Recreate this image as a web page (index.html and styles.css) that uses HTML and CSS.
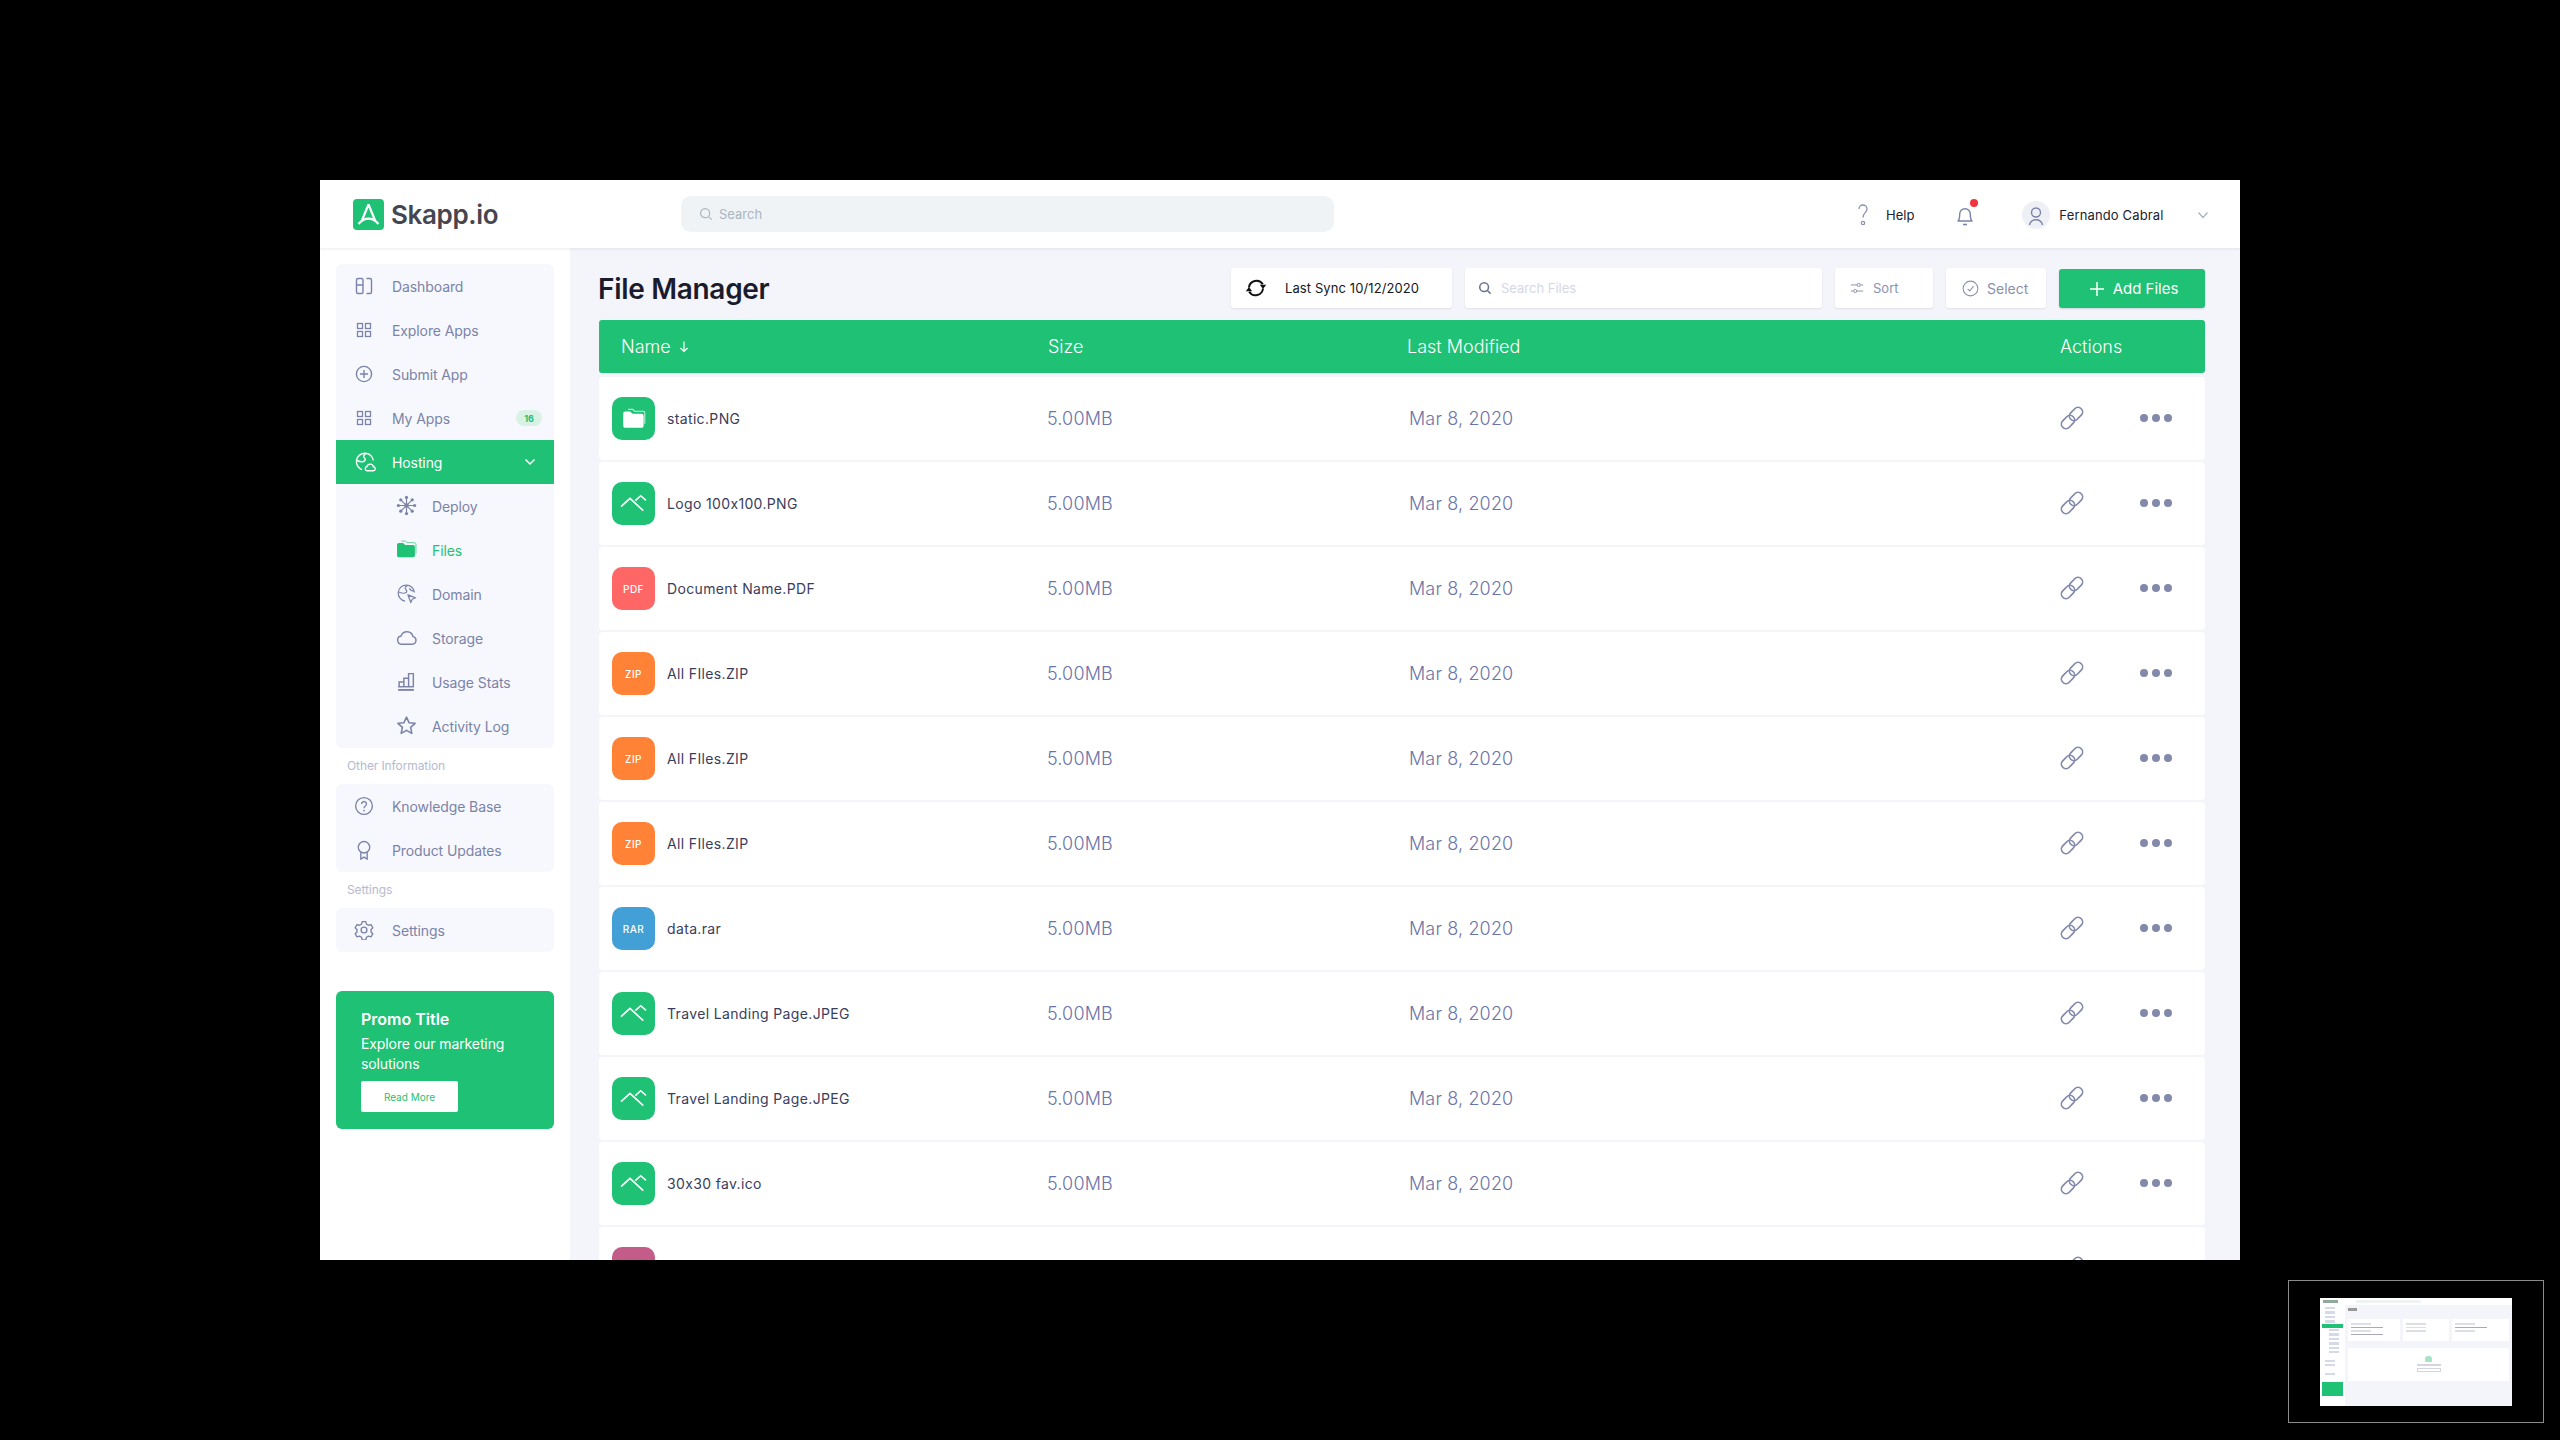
FILE: index.html
```html
<!DOCTYPE html>
<html>
<head>
  <meta charset="UTF-8">
  <title>Skapp.io File Manager</title>
  <link rel="stylesheet" href="styles.css">
</head>
<body>
  <svg class="defs" width="0" height="0">
    <symbol id="i-folder" viewBox="0 0 20 18">
      <path d="M1 4.500c0-1 .7-1.700 1.700-1.700h4.100l1.900 1.900h7.600c1 0 1.700.7 1.700 1.700v8.200c0 1-.7 1.700-1.700 1.700H2.700c-1 0-1.700-.7-1.700-1.700z" fill="currentColor"/>
      <path d="M5 1h4l1.500 1.500h7c.8 0 1.500.7 1.500 1.500v9" fill="none" stroke="currentColor" stroke-width=".9" opacity=".75"/>
    </symbol>
    <symbol id="i-peaks" viewBox="0 0 43 43">
      <path d="M9 24.700 18 16.300 31.300 28.700M23.300 18.700 28.700 13.700 34 18.300" fill="none" stroke="#fff" stroke-width="1.600"/>
    </symbol>
    <symbol id="i-link" viewBox="1.500 1.500 21 21">
      <g fill="none" stroke="currentColor" stroke-width="1.500">
        <rect x="9" y="4.500" width="13" height="8" rx="4" transform="rotate(-45 15.500 8.500)"/>
        <rect x="2" y="11.500" width="13" height="8" rx="4" transform="rotate(-45 8.500 15.500)"/>
      </g>
    </symbol>
    <symbol id="i-dots" viewBox="0 0 32 8">
      <circle cx="4" cy="4" r="4" fill="currentColor"/><circle cx="16" cy="4" r="4" fill="currentColor"/><circle cx="28" cy="4" r="4" fill="currentColor"/>
    </symbol>
    <symbol id="i-grid" viewBox="0 0 16 16">
      <g fill="none" stroke="currentColor" stroke-width="1.300"><rect x="1.500" y="1.500" width="5" height="5"/><rect x="9.500" y="1.500" width="5" height="5"/><rect x="1.500" y="9.500" width="5" height="5"/><rect x="9.500" y="9.500" width="5" height="5"/></g>
    </symbol>
  </svg>

  <div class="app">
    <header class="topbar">
      <div class="brand">
        <svg class="brand-mark" viewBox="0 0 31 31">
          <rect width="31" height="31" rx="4" fill="#1fc175"/>
          <path d="M15.500 5.500 8.500 22.500M15.500 5.500l7 17M5.500 25c3-3.600 6.200-5.400 10-5.400s7 1.800 10 5.400" fill="none" stroke="#fff" stroke-width="2.200"/>
        </svg>
        <span class="brand-name">Skapp.io</span>
      </div>
      <div class="global-search">
        <svg class="ico-14" viewBox="0 0 16 16"><circle cx="7" cy="7" r="5.200" fill="none" stroke="currentColor" stroke-width="1.400"/><path d="M11 11l3.500 3.500" stroke="currentColor" stroke-width="1.400"/></svg>
        <span>Search</span>
      </div>
      <div class="top-right">
        <svg class="q-mark" viewBox="0 0 12 24"><path d="M2 6a4 4 0 0 1 8 0c0 3.500-4 4-4 8.500" fill="none" stroke="#8a91ad" stroke-width="1.300"/><circle cx="6" cy="20" r="1.700" fill="none" stroke="#8a91ad" stroke-width="1.200"/></svg>
        <span class="help">Help</span>
        <span class="bell">
          <svg viewBox="0 0 20 24" width="20" height="24"><path d="M3 18c1.500-1.500 1.700-3 1.700-7a5.300 5.300 0 0 1 10.600 0c0 4 .2 5.500 1.700 7z" fill="none" stroke="#7b83a8" stroke-width="1.400" stroke-linejoin="round"/><path d="M8 21.500h4" stroke="#7b83a8" stroke-width="1.600"/></svg>
          <i class="bell-dot"></i>
        </span>
        <span class="avatar">
          <svg viewBox="0 0 28 28" width="28" height="28"><circle cx="14" cy="11.500" r="4.500" fill="none" stroke="#7b83a8" stroke-width="1.400"/><path d="M7.500 24c.8-3.500 3.200-5.200 6.500-5.200s5.700 1.700 6.500 5.200" fill="none" stroke="#7b83a8" stroke-width="1.400"/></svg>
        </span>
        <span class="user-name">Fernando Cabral</span>
        <svg class="user-caret" viewBox="0 0 12 8"><path d="M1.500 1.500 6 6.500l4.500-5" fill="none" stroke="#a9b0c4" stroke-width="1.200"/></svg>
      </div>
    </header>

    <div class="layout">
      <aside class="sidebar">
        <nav class="nav-group">
          <a class="nav-item">
            <svg class="nav-ico" viewBox="0 0 20 20"><g fill="none" stroke="currentColor" stroke-width="1.400"><rect x="2.500" y="2.500" width="6.500" height="15" rx="1.500"/><path d="M2.500 9h6.500M12.500 2.500h3.500c.8 0 1.500.7 1.500 1.500v12c0 .8-.7 1.500-1.500 1.500h-3.500"/></g></svg>
            Dashboard
          </a>
          <a class="nav-item"><svg class="nav-ico nav-ico-sm"><use href="#i-grid"/></svg>Explore Apps</a>
          <a class="nav-item">
            <svg class="nav-ico" viewBox="0 0 20 20"><g fill="none" stroke="currentColor" stroke-width="1.400"><circle cx="10" cy="10" r="7.600"/><path d="M10 6v8M6 10h8"/></g></svg>
            Submit App
          </a>
          <a class="nav-item"><svg class="nav-ico nav-ico-sm"><use href="#i-grid"/></svg>My Apps<span class="badge">16</span></a>
          <a class="nav-item active">
            <svg class="nav-ico" viewBox="0 0 22 22"><g fill="none" stroke="currentColor" stroke-width="1.400"><path d="M19.300 9.500A8.500 8.500 0 1 0 8 18.700"/><path d="M12 2.500c-2.500 1.500-3 3.200-1.500 4.500 1.300 1.200 1 2.800-1 3.500-2.400.8-4 0-6.500-1"/><path d="M13 19.800h6a2 2 0 0 0 .4-4 3.300 3.300 0 0 0-6.400-.3 2.200 2.200 0 0 0 0 4.300z"/></g></svg>
            Hosting
            <svg class="nav-caret" viewBox="0 0 12 8"><path d="M1.500 1.500 6 6l4.500-4.500" fill="none" stroke="#fff" stroke-width="1.500"/></svg>
          </a>
          <a class="nav-item sub">
            <svg class="nav-ico" viewBox="0 0 22 22"><g stroke="currentColor" stroke-width="1.200"><path d="M11 3v16M3 11h16M5.300 5.300l11.400 11.400M16.700 5.300 5.300 16.700"/></g><g fill="currentColor"><circle cx="11" cy="11" r="2.300"/><circle cx="11" cy="2.500" r="1.700"/><circle cx="11" cy="19.500" r="1.700"/><circle cx="2.500" cy="11" r="1.700"/><circle cx="19.500" cy="11" r="1.700"/><circle cx="5" cy="5" r="1.700"/><circle cx="17" cy="5" r="1.700"/><circle cx="5" cy="17" r="1.700"/><circle cx="17" cy="17" r="1.700"/></g></svg>
            Deploy
          </a>
          <a class="nav-item sub current"><svg class="nav-ico"><use href="#i-folder"/></svg>Files</a>
          <a class="nav-item sub">
            <svg class="nav-ico" viewBox="0 0 22 22"><g fill="none" stroke="currentColor" stroke-width="1.300"><path d="M19.300 10A8.500 8.500 0 1 0 9.500 19"/><path d="M12 2.500c-2.500 1.500-3 3.200-1.500 4.500 1.300 1.200 1 2.800-1 3.500-2.400.8-4 0-6.500-1M14 5.500c1 2 3 3 5 3"/><path d="M12.500 12.500l8 3-3.500 1.500-1.500 3.500z" stroke-linejoin="round"/></g></svg>
            Domain
          </a>
          <a class="nav-item sub">
            <svg class="nav-ico" viewBox="0 0 22 16"><path d="M5.500 15H17a4 4 0 0 0 .8-7.900A6.500 6.500 0 0 0 5.300 6.500 4.300 4.300 0 0 0 5.500 15z" fill="none" stroke="currentColor" stroke-width="1.500"/></svg>
            Storage
          </a>
          <a class="nav-item sub">
            <svg class="nav-ico" viewBox="0 0 20 20"><g fill="none" stroke="currentColor" stroke-width="1.400"><path d="M3 15v-4.500h4.500V15M7.500 15V7h4.500v8M12 15V2.500h4.500V15"/><path d="M2 15h15" /><path d="M2 18h15" stroke-width="1.800"/></g></svg>
            Usage Stats
          </a>
          <a class="nav-item sub">
            <svg class="nav-ico" viewBox="0 0 20 20"><path d="M10 2l2.400 5.300 5.800.6-4.300 3.900 1.200 5.700L10 14.600l-5.100 2.900 1.200-5.700-4.300-3.900 5.800-.6z" fill="none" stroke="currentColor" stroke-width="1.500" stroke-linejoin="round"/></svg>
            Activity Log
          </a>
        </nav>
        <div class="nav-label">Other Information</div>
        <nav class="nav-group">
          <a class="nav-item">
            <svg class="nav-ico" viewBox="0 0 22 22"><circle cx="11" cy="11" r="9.200" fill="none" stroke="currentColor" stroke-width="1.500"/><path d="M8.300 8.700a2.700 2.700 0 1 1 4.200 2.300c-1 .7-1.500 1.200-1.500 2.500" fill="none" stroke="currentColor" stroke-width="1.500"/><circle cx="11" cy="16" r="1" fill="currentColor"/></svg>
            Knowledge Base
          </a>
          <a class="nav-item">
            <svg class="nav-ico" viewBox="0 0 22 22"><g fill="none" stroke="currentColor" stroke-width="1.500"><circle cx="11" cy="8" r="6.300"/><path d="M7.500 13.500V21l3.500-2.200 3.500 2.200v-7.500"/></g></svg>
            Product Updates
          </a>
        </nav>
        <div class="nav-label">Settings</div>
        <nav class="nav-group">
          <a class="nav-item">
            <svg class="nav-ico" viewBox="0 0 22 22"><g fill="none" stroke="currentColor" stroke-width="1.500" stroke-linejoin="round"><path d="M9 1.800h4l.7 2.800 2.200 1.200 2.800-.8 2 3.500-2 2 .1 1.300-.1 1.300 2 2-2 3.500-2.800-.8-2.200 1.200-.7 2.800H9l-.7-2.800-2.200-1.200-2.800.8-2-3.500 2-2-.1-1.300.1-1.300-2-2 2-3.500 2.800.8 2.200-1.200z"/><circle cx="11" cy="11" r="3.200"/></g></svg>
            Settings
          </a>
        </nav>
        <div class="promo">
          <div class="promo-title">Promo Title</div>
          <div class="promo-text">Explore our marketing solutions</div>
          <a class="promo-btn">Read More</a>
        </div>
      </aside>

      <main class="main">
        <div class="toolbar">
          <h1>File Manager</h1>
          <div class="tool sync">
            <svg viewBox="0 0 24 24" width="24" height="24"><g fill="none" stroke="#111" stroke-width="2"><path d="M5 11.500a7.500 7.500 0 0 1 13.800-3.200M19 12.500a7.500 7.500 0 0 1-13.800 3.200"/></g><path d="M15.800 8.800h6.400L19 13zM1.800 15.200h6.400L5 11z" fill="#111"/></svg>
            <span>Last Sync 10/12/2020</span>
          </div>
          <div class="tool file-search">
            <svg class="ico-14" viewBox="0 0 16 16"><circle cx="7" cy="7" r="5" fill="none" stroke="currentColor" stroke-width="1.800"/><path d="M10.500 10.500l4 4" stroke="currentColor" stroke-width="1.800"/></svg>
            <span>Search Files</span>
          </div>
          <div class="tool sort">
            <svg class="ico-14" viewBox="0 0 16 16"><g fill="none" stroke="currentColor" stroke-width="1.100"><path d="M1 4.500h7M12 4.500h3M1 11.500h3M8 11.500h7"/><circle cx="10" cy="4.500" r="1.800"/><circle cx="6" cy="11.500" r="1.800"/></g></svg>
            <span>Sort</span>
          </div>
          <div class="tool select">
            <svg class="ico-17" viewBox="0 0 18 18"><circle cx="9" cy="9" r="7.800" fill="none" stroke="currentColor" stroke-width="1.100"/><path d="M6 9.300l2.200 2.200L12.300 6.500" fill="none" stroke="currentColor" stroke-width="1.100"/></svg>
            <span>Select</span>
          </div>
          <div class="add-files">
            <svg class="ico-14" viewBox="0 0 14 14"><path d="M7 0v14M0 7h14" stroke="#fff" stroke-width="1.500"/></svg>
            <span>Add Files</span>
          </div>
        </div>

        <div class="table-head">
          <span>Name <svg class="sort-arrow" viewBox="0 0 10 12"><path d="M5 .5v10M1.500 7 5 10.500 8.500 7" fill="none" stroke="#fff" stroke-width="1.200"/></svg></span>
          <span>Size</span>
          <span>Last Modified</span>
          <span>Actions</span>
        </div>

        <div class="file-row">
          <div class="file-name"><span class="file-ico green"><svg class="folder-ico"><use href="#i-folder"/></svg></span>static.PNG</div>
          <div class="file-meta">5.00MB</div><div class="file-meta">Mar 8, 2020</div>
          <div class="file-actions"><svg class="link-ico"><use href="#i-link"/></svg><svg class="dots-ico"><use href="#i-dots"/></svg></div>
        </div>
        <div class="file-row">
          <div class="file-name"><span class="file-ico green"><svg class="peaks-ico"><use href="#i-peaks"/></svg></span>Logo 100x100.PNG</div>
          <div class="file-meta">5.00MB</div><div class="file-meta">Mar 8, 2020</div>
          <div class="file-actions"><svg class="link-ico"><use href="#i-link"/></svg><svg class="dots-ico"><use href="#i-dots"/></svg></div>
        </div>
        <div class="file-row">
          <div class="file-name"><span class="file-ico red">PDF</span>Document Name.PDF</div>
          <div class="file-meta">5.00MB</div><div class="file-meta">Mar 8, 2020</div>
          <div class="file-actions"><svg class="link-ico"><use href="#i-link"/></svg><svg class="dots-ico"><use href="#i-dots"/></svg></div>
        </div>
        <div class="file-row">
          <div class="file-name"><span class="file-ico orange">ZIP</span>All FIles.ZIP</div>
          <div class="file-meta">5.00MB</div><div class="file-meta">Mar 8, 2020</div>
          <div class="file-actions"><svg class="link-ico"><use href="#i-link"/></svg><svg class="dots-ico"><use href="#i-dots"/></svg></div>
        </div>
        <div class="file-row">
          <div class="file-name"><span class="file-ico orange">ZIP</span>All FIles.ZIP</div>
          <div class="file-meta">5.00MB</div><div class="file-meta">Mar 8, 2020</div>
          <div class="file-actions"><svg class="link-ico"><use href="#i-link"/></svg><svg class="dots-ico"><use href="#i-dots"/></svg></div>
        </div>
        <div class="file-row">
          <div class="file-name"><span class="file-ico orange">ZIP</span>All FIles.ZIP</div>
          <div class="file-meta">5.00MB</div><div class="file-meta">Mar 8, 2020</div>
          <div class="file-actions"><svg class="link-ico"><use href="#i-link"/></svg><svg class="dots-ico"><use href="#i-dots"/></svg></div>
        </div>
        <div class="file-row">
          <div class="file-name"><span class="file-ico blue">RAR</span>data.rar</div>
          <div class="file-meta">5.00MB</div><div class="file-meta">Mar 8, 2020</div>
          <div class="file-actions"><svg class="link-ico"><use href="#i-link"/></svg><svg class="dots-ico"><use href="#i-dots"/></svg></div>
        </div>
        <div class="file-row">
          <div class="file-name"><span class="file-ico green"><svg class="peaks-ico"><use href="#i-peaks"/></svg></span>Travel Landing Page.JPEG</div>
          <div class="file-meta">5.00MB</div><div class="file-meta">Mar 8, 2020</div>
          <div class="file-actions"><svg class="link-ico"><use href="#i-link"/></svg><svg class="dots-ico"><use href="#i-dots"/></svg></div>
        </div>
        <div class="file-row">
          <div class="file-name"><span class="file-ico green"><svg class="peaks-ico"><use href="#i-peaks"/></svg></span>Travel Landing Page.JPEG</div>
          <div class="file-meta">5.00MB</div><div class="file-meta">Mar 8, 2020</div>
          <div class="file-actions"><svg class="link-ico"><use href="#i-link"/></svg><svg class="dots-ico"><use href="#i-dots"/></svg></div>
        </div>
        <div class="file-row">
          <div class="file-name"><span class="file-ico green"><svg class="peaks-ico"><use href="#i-peaks"/></svg></span>30x30 fav.ico</div>
          <div class="file-meta">5.00MB</div><div class="file-meta">Mar 8, 2020</div>
          <div class="file-actions"><svg class="link-ico"><use href="#i-link"/></svg><svg class="dots-ico"><use href="#i-dots"/></svg></div>
        </div>
        <div class="file-row">
          <div class="file-name"><span class="file-ico pink"></span></div>
          <div class="file-meta"></div><div class="file-meta"></div>
          <div class="file-actions"><svg class="link-ico"><use href="#i-link"/></svg><svg class="dots-ico"><use href="#i-dots"/></svg></div>
        </div>
      </main>
    </div>
  </div>

  <div class="minimap">
    <div class="mini-page">
      <div class="mini-top"><i class="mini-logo"></i><i class="mini-search"></i></div>
      <div class="mini-layout">
        <div class="mini-side">
          <i></i><i></i><i></i><i></i><i class="on"></i><i class="in"></i><i class="in"></i><i class="in"></i><i class="in"></i><i class="in"></i><i class="in"></i>
          <i class="gap"></i><i></i><i></i><i class="gap"></i><i></i>
          <b class="mini-promo"></b>
        </div>
        <div class="mini-main">
          <div class="mini-title"></div>
          <div class="mini-cards">
            <div class="mini-card"><i></i><i class="dark"></i><i></i><i class="dark"></i></div>
            <div class="mini-card"><i></i><i></i><i></i></div>
            <div class="mini-card"><i></i><i class="dark"></i><i></i></div>
          </div>
          <div class="mini-drop"><i class="mini-cloud"></i><i class="mini-line"></i><i class="mini-btn"></i></div>
        </div>
      </div>
    </div>
  </div>
</body>
</html>
```

FILE: styles.css
```css
* {
  box-sizing: border-box;
}
html, body {
  margin: 0;
  padding: 0;
}
body {
  width: 2560px;
  height: 1440px;
  position: relative;
  overflow: hidden;
  background-color: #000;
  padding: 180px 320px;
  font-family: Inter, "Noto Sans", sans-serif;
  font-size: 14px;
  color: #3a3d5c;
}
.defs {
  position: absolute;
}
.app {
  width: 1920px;
  height: 1080px;
  background-color: #f4f5fa;
  display: flex;
  flex-direction: column;
  overflow: hidden;
}

/* top bar */
.topbar {
  height: 68px;
  flex: none;
  background-color: #fff;
  box-shadow: 0 1px 3px rgba(60, 70, 110, .1);
  display: flex;
  align-items: center;
  position: relative;
}
.brand {
  width: 361px;
  padding-left: 33px;
  display: flex;
  align-items: center;
  gap: 7px;
}
.brand-mark {
  width: 31px;
  height: 31px;
}
.brand-name {
  font-size: 26px;
  font-weight: 600;
  color: #444650;
  letter-spacing: -.35px;
}
.global-search {
  width: 653px;
  height: 36px;
  background-color: #eff3f6;
  border-radius: 10px;
  display: flex;
  align-items: center;
  gap: 6px;
  padding-left: 18px;
  color: #a9b6be;
  font-size: 13px;
}
.ico-14 {
  width: 14px;
  height: 14px;
  flex: none;
}
.ico-17 {
  width: 17px;
  height: 17px;
  flex: none;
}
.top-right {
  margin-left: 523px;
  padding-top: 1px;
  display: flex;
  align-items: center;
  color: #20222e;
  font-size: 13px;
}
.q-mark {
  width: 12px;
  height: 24px;
}
.help {
  margin-left: 17px;
}
.bell {
  position: relative;
  margin-left: 41px;
  width: 20px;
  height: 24px;
}
.bell-dot {
  position: absolute;
  top: -4px;
  right: -3px;
  width: 8px;
  height: 8px;
  border-radius: 50%;
  background-color: #f5333f;
}
.avatar {
  margin-left: 47px;
  width: 28px;
  height: 28px;
  border-radius: 50%;
  background-color: #eef0f6;
  overflow: hidden;
}
.user-name {
  margin-left: 9px;
  letter-spacing: .15px;
  white-space: nowrap;
}
.user-caret {
  margin-left: 33px;
  width: 12px;
  height: 8px;
}

/* sidebar */
.layout {
  flex: 1;
  display: flex;
  min-height: 0;
}
.sidebar {
  width: 250px;
  flex: none;
  background-color: #fff;
  padding: 16px 16px 0;
}
.nav-group {
  background-color: #f7f8fd;
  border-radius: 6px;
}
.nav-item {
  height: 44px;
  display: flex;
  align-items: center;
  padding-left: 56px;
  position: relative;
  color: #7b83a8;
  font-size: 14px;
  letter-spacing: -.1px;
}
.nav-ico {
  position: absolute;
  left: 18px;
  top: 12px;
  width: 20px;
  height: 20px;
  color: #7b83a8;
}
.nav-ico-sm {
  left: 20px;
  top: 14px;
  width: 16px;
  height: 16px;
}
.nav-item.active {
  background-color: #1fc175;
  color: #fff;
}
.nav-item.active .nav-ico {
  color: #fff;
  width: 22px;
  height: 22px;
  top: 11px;
}
.nav-caret {
  position: absolute;
  left: 188px;
  top: 18px;
  width: 12px;
  height: 8px;
}
.nav-item.sub {
  padding-left: 96px;
}
.nav-item.sub .nav-ico {
  left: 60px;
  width: 21px;
  height: 21px;
  top: 11px;
}
.nav-item.current {
  color: #1fc175;
}
.nav-item.current .nav-ico {
  color: #1fc175;
}
.badge {
  position: absolute;
  right: 12px;
  top: 14px;
  width: 26px;
  height: 16px;
  border-radius: 8px;
  background-color: #d8f3e6;
  color: #1fc175;
  font-size: 9px;
  font-weight: 700;
  display: flex;
  align-items: center;
  justify-content: center;
}
.nav-label {
  height: 36px;
  display: flex;
  align-items: center;
  padding-left: 11px;
  padding-bottom: 1px;
  font-size: 12px;
  letter-spacing: -.1px;
  color: #b5bacf;
}
.promo {
  margin-top: 39px;
  height: 138px;
  background-color: #1fc175;
  border-radius: 6px;
  padding: 17px 25px 0;
  color: #fff;
}
.promo-title {
  font-size: 16px;
  font-weight: 600;
  line-height: 22px;
}
.promo-text {
  margin-top: 4px;
  font-size: 14px;
  line-height: 20px;
  letter-spacing: -.1px;
  width: 160px;
}
.promo-btn {
  display: flex;
  align-items: center;
  justify-content: center;
  margin-top: 7px;
  width: 97px;
  height: 31px;
  background-color: #fff;
  border-radius: 2px;
  color: #1fc175;
  font-size: 10px;
}

/* main */
.main {
  flex: 1;
  min-width: 0;
  padding: 20px 35px 0 29px;
  overflow: hidden;
}
.toolbar {
  height: 40px;
  display: flex;
  align-items: center;
  gap: 13px;
  margin-bottom: 12px;
}
.toolbar h1 {
  margin: 1px auto 0 -1px;
  font-size: 28px;
  font-weight: 600;
  color: #1a1c2e;
  letter-spacing: -.3px;
}
.tool {
  height: 40px;
  background-color: #fff;
  border-radius: 3px;
  box-shadow: 0 1px 2px rgba(60, 70, 110, .12);
  display: flex;
  align-items: center;
  font-size: 13px;
  color: #8a91ad;
}
.sync {
  width: 221px;
  padding-left: 13px;
  gap: 17px;
  color: #15161f;
  letter-spacing: .1px;
}
.file-search {
  width: 357px;
  padding-left: 13px;
  gap: 9px;
  color: #6d7499;
}
.file-search span {
  color: #d5d8e4;
}
.sort {
  width: 98px;
  padding-left: 15px;
  gap: 9px;
}
.select {
  width: 100px;
  padding-left: 16px;
  gap: 8px;
  font-size: 14px;
}
.add-files {
  width: 146px;
  height: 39px;
  margin-top: 1px;
  padding-left: 4px;
  background-color: #1fc175;
  border-radius: 3px;
  box-shadow: 0 1px 2px rgba(60, 70, 110, .2);
  color: #fff;
  font-size: 15px;
  display: flex;
  align-items: center;
  justify-content: center;
  gap: 9px;
}
.table-head {
  height: 53px;
  margin-bottom: 4px;
  background-color: #1fc175;
  border-radius: 3px;
  color: #fff;
  font-size: 18px;
  font-weight: 300;
  display: grid;
  grid-template-columns: 427px 359px 653px 1fr;
  align-items: center;
  padding-left: 22px;
}
.sort-arrow {
  width: 10px;
  height: 12px;
  margin-left: 3px;
}
.file-row {
  height: 83px;
  margin-bottom: 2px;
  background-color: #fff;
  border-radius: 4px;
  display: grid;
  grid-template-columns: 435px 362px 651px 1fr;
  align-items: center;
  padding-left: 13px;
}
.file-name {
  display: flex;
  align-items: center;
  gap: 12px;
  font-size: 14px;
  font-weight: 400;
  letter-spacing: .35px;
  color: #3a3d5c;
}
.file-ico {
  width: 43px;
  height: 43px;
  border-radius: 10px;
  display: flex;
  align-items: center;
  justify-content: center;
  flex: none;
  color: #fff;
  font-size: 10px;
  font-weight: 500;
  letter-spacing: .5px;
}
.green { background-color: #1fc175; }
.red { background-color: #ff6666; }
.orange { background-color: #ff8237; }
.blue { background-color: #42a0d6; }
.pink { background-color: #c45c8a; }
.folder-ico {
  width: 24px;
  height: 22px;
}
.peaks-ico {
  width: 43px;
  height: 43px;
}
.file-meta {
  font-size: 18px;
  font-weight: 300;
  letter-spacing: .15px;
  color: #6b74a8;
}
.file-actions {
  display: flex;
  align-items: center;
  color: #8289aa;
  margin-top: -1px;
}
.link-ico {
  width: 24px;
  height: 24px;
}
.dots-ico {
  margin-left: 56px;
  width: 32px;
  height: 8px;
}

/* minimap over the bottom right corner */
.minimap {
  position: absolute;
  left: 2288px;
  top: 1280px;
  width: 256px;
  height: 143px;
  border: 1px solid #8c8c8c;
  padding: 17px 0 0 31px;
}
.mini-page {
  width: 192px;
  height: 108px;
  background-color: #f4f5fa;
  filter: blur(.5px);
  display: flex;
  flex-direction: column;
}
.mini-top {
  height: 7px;
  background-color: #fff;
  display: flex;
  align-items: center;
  padding-left: 3px;
}
.mini-logo {
  width: 15px;
  height: 3px;
  background-color: #8fa89b;
}
.mini-search {
  margin-left: 18px;
  width: 65px;
  height: 3px;
  background-color: #eff3f6;
}
.mini-layout {
  flex: 1;
  display: flex;
}
.mini-side {
  width: 25px;
  background-color: #fff;
  padding: 1px 2px 0;
  display: flex;
  flex-direction: column;
}
.mini-side i {
  height: 4.400px;
  flex: none;
  border: solid transparent;
  border-width: 1.400px 8px 1.400px 3px;
  background-color: #d6d9e6;
  background-clip: padding-box;
}
.mini-side i.in {
  border-left-width: 7px;
  border-right-width: 4px;
}
.mini-side i.on {
  border: 0;
  background-color: #1fc175;
}
.mini-side i.gap {
  background-color: transparent;
}
.mini-promo {
  margin-top: 6px;
  height: 14px;
  background-color: #1fc175;
}
.mini-main {
  flex: 1;
  padding: 3px 3px 0;
}
.mini-title {
  width: 9px;
  height: 3px;
  background-color: #999;
  margin-bottom: 8px;
}
.mini-cards {
  display: grid;
  grid-template-columns: 52px 46px 57px;
  gap: 3px;
  margin-bottom: 7px;
}
.mini-card {
  height: 22px;
  background-color: #fff;
  padding: 4px 3px;
  display: flex;
  flex-direction: column;
  gap: 2px;
}
.mini-card i {
  height: 1.500px;
  width: 20px;
  background-color: #dcdfe8;
}
.mini-card i.dark {
  width: 32px;
  background-color: #a9acb8;
}
.mini-drop {
  height: 33px;
  background-color: #fff;
  display: flex;
  flex-direction: column;
  align-items: center;
  padding-top: 8px;
  gap: 2px;
}
.mini-cloud {
  width: 7px;
  height: 6px;
  border-radius: 3px 3px 1px 1px;
  background-color: #a8e3c7;
}
.mini-line {
  width: 24px;
  height: 1.500px;
  background-color: #d4d6df;
}
.mini-btn {
  width: 24px;
  height: 4px;
  border: 1px solid #d4d6df;
}
```
